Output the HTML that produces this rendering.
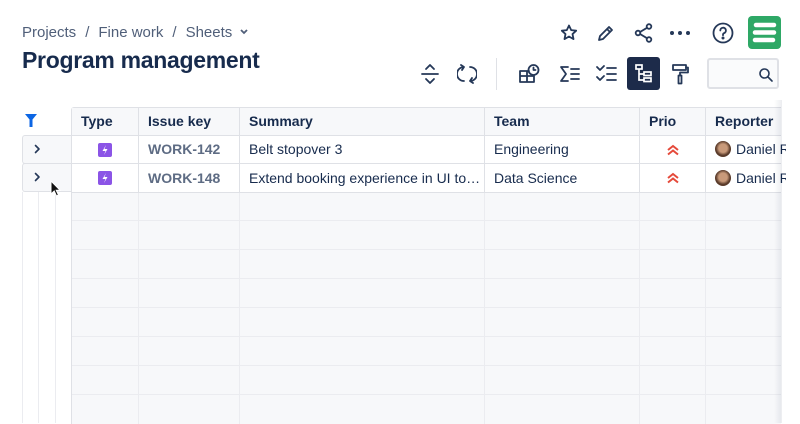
<!DOCTYPE html><html><head><style>
body{margin:0;width:800px;height:423px;overflow:hidden;background:#fff;font-family:"Liberation Sans",sans-serif;color:#172b4d;position:relative}
.a{position:absolute}
.bc{left:22px;top:24px;font-size:15px;color:#505f79;white-space:nowrap}
.bc span{margin:0 9px}
h1{position:absolute;left:22px;top:47px;margin:0;font-size:23px;font-weight:bold;letter-spacing:-0.3px;color:#172b4d}
svg.i{position:absolute;fill:none;stroke:#253858;stroke-width:1.8;stroke-linecap:round;stroke-linejoin:round}
.grid{left:71px;top:107px;width:709px;height:316px;background:#f7f8fa;border-left:1px solid #dfe1e6;border-top:1px solid #dfe1e6;border-radius:3px 0 0 0}
.hl{position:absolute;left:0;width:709px;height:1px;background:#ebecf0}
.vl{position:absolute;top:0;width:1px;height:316px;background:#ebecf0}
.row{position:absolute;left:0;width:709px;height:28px;background:#fff;border-bottom:1px solid #dfe1e6;box-sizing:border-box;z-index:1}
.hdr{background:#f7f8fa}
.c{position:absolute;top:0;height:27px;line-height:27px;font-size:14px;white-space:nowrap;overflow:hidden;border-right:1px solid #dfe1e6;padding-left:9px;box-sizing:border-box}
.hdr .c{font-weight:bold}
.key{color:#5e6c84;font-weight:bold}
.gut{position:absolute;left:22px;width:50px;height:28px;background:#f7f8fa;border:1px solid #dfe1e6;border-right:none;border-radius:3px 0 0 3px;box-sizing:border-box}
.bolt{position:absolute;left:26px;top:7px;width:14px;height:14px;background:#8b54e6;border-radius:2px;padding:0}
.bolt svg{display:block}
.av{display:inline-block;width:16px;height:16px;border-radius:50%;background:radial-gradient(circle at 50% 45%,#c99a7a 35%,#5a3b2a 60%);vertical-align:-3px;margin-right:5px}
</style></head><body>
<div class="a bc">Projects<span>/</span>Fine work<span>/</span>Sheets <svg width="10" height="8" style="vertical-align:1px;margin-left:3px" viewBox="0 0 10 8"><path d="M2 2l3 3 3-3" stroke="#505f79" stroke-width="1.8" fill="none"/></svg></div>
<h1>Program management</h1>
<svg class="i" style="left:559px;top:23px" width="20" height="20" viewBox="0 0 20 20"><path d="M10 2.5l2.2 4.6 5 .6-3.7 3.4 1 5-4.5-2.6-4.5 2.6 1-5L2.8 7.7l5-.6z"/></svg>
<svg class="i" style="left:596px;top:23px" width="20" height="20" viewBox="0 0 20 20"><path d="M3 17l1-4 9-9 3 3-9 9zM11 6l3 3"/></svg>
<svg class="i" style="left:633px;top:22px" width="22" height="22" viewBox="0 0 22 22"><circle cx="5" cy="11" r="2.3"/><circle cx="16" cy="4.5" r="2.3"/><circle cx="16" cy="17.5" r="2.3"/><path d="M7 10l7-4.2M7 12l7 4.2"/></svg>
<svg class="a" style="left:669px;top:30px" width="22" height="6" viewBox="0 0 22 6"><circle cx="3" cy="3" r="2" fill="#253858"/><circle cx="11" cy="3" r="2" fill="#253858"/><circle cx="19" cy="3" r="2" fill="#253858"/></svg>
<svg class="i" style="left:712px;top:22px" width="22" height="22" viewBox="0 0 22 22"><circle cx="11" cy="11" r="9.5"/><path d="M8.3 8.5a2.8 2.8 0 1 1 3.8 2.6c-.8.4-1.1.9-1.1 1.7v.4"/><circle cx="11" cy="16" r=".6" fill="#253858"/></svg>
<div class="a" style="left:748px;top:16px;width:33px;height:33px;background:#2ea866;border-radius:4px"><svg width="33" height="33" viewBox="0 0 33 33"><path d="M8 9h18M7 16.5h19M7 24h18" stroke="#fff" stroke-width="4.5" stroke-linecap="round"/></svg></div>
<svg class="i" style="left:420px;top:63px" width="20" height="22" viewBox="0 0 20 22"><path d="M6 6l4-4 4 4M6 16l4 4 4-4M2 11h16"/></svg>
<svg class="i" style="left:457px;top:63px" width="20" height="22" viewBox="0 0 20 22"><path d="M7 4a7 7 0 0 0 0 14M4 2l3 2-2 3M13 18a7 7 0 0 0 0-14M16 20l-3-2 2-3"/></svg>
<div class="a" style="left:496px;top:58px;width:1px;height:32px;background:#dfe1e6"></div>
<svg class="i" style="left:518px;top:63px" width="24" height="22" viewBox="0 0 24 22"><path d="M2 8h7v11H2zM2 13h14v6H9M9 8h2"/><circle cx="15.5" cy="7" r="5"/><path d="M15.5 4.5V7h2"/></svg>
<svg class="i" style="left:558px;top:64px" width="24" height="20" viewBox="0 0 24 20"><path d="M10 3H3l5 7-5 7h7M13 5h8M13 10h8M13 15h8"/></svg>
<svg class="i" style="left:595px;top:64px" width="24" height="20" viewBox="0 0 24 20"><path d="M2 3l3 3 4-4M2 13l3 3 4-4M12 4h9M12 10h9M12 16h9"/></svg>
<div class="a" style="left:627px;top:57px;width:33px;height:33px;background:#1d2b4a;border-radius:3px"><svg width="33" height="33" viewBox="0 0 33 33" fill="none" stroke="#fff" stroke-width="1.7"><rect x="9" y="8" width="6" height="4"/><rect x="17" y="15" width="7" height="3.5"/><rect x="17" y="21" width="7" height="3.5"/><path d="M12 12v11h5M12 17h5"/></svg></div>
<svg class="i" style="left:670px;top:63px" width="20" height="22" viewBox="0 0 20 22"><rect x="3" y="2" width="13" height="5"/><path d="M16 4.5h2v5H10v3"/><rect x="8.5" y="12.5" width="3" height="8"/></svg>
<div class="a" style="left:707px;top:58px;width:72px;height:31px;border:2px solid #dfe1e6;border-radius:3px;background:#fafbfc;box-sizing:border-box"><svg class="i" style="left:49px;top:7px;stroke-width:1.6" width="16" height="16" viewBox="0 0 16 16"><circle cx="6.5" cy="6.5" r="4.5"/><path d="M10 10l4 4"/></svg></div>
<svg class="a" style="left:25px;top:114px" width="12" height="14" viewBox="0 0 12 14"><path d="M0 0h12L7.5 5.5V13h-3V5.5z" fill="#0c66e4"/></svg>
<div class="a" style="left:22px;top:192px;width:1px;height:231px;background:#ebecf0"></div>
<div class="a" style="left:38px;top:192px;width:1px;height:231px;background:#ebecf0"></div>
<div class="a" style="left:55px;top:192px;width:1px;height:231px;background:#ebecf0"></div>
<div class="gut" style="top:135px;height:29px"></div>
<div class="gut" style="top:163px;height:29px"></div>
<svg class="i" style="left:33px;top:143px;stroke-width:1.6" width="8" height="12" viewBox="0 0 8 12"><path d="M2.5 2.5l3.5 3.5-3.5 3.5"/></svg>
<svg class="i" style="left:33px;top:171px;stroke-width:1.6" width="8" height="12" viewBox="0 0 8 12"><path d="M2.5 2.5l3.5 3.5-3.5 3.5"/></svg>
<svg class="a" style="left:50px;top:180px;z-index:3" width="12" height="18" viewBox="0 0 12 18"><path d="M1 1v13l3.2-3 2.3 5 2-1-2.3-4.8H10z" fill="#111" stroke="#fff" stroke-width="1"/></svg>
<div class="a grid">
<div class="hl" style="top:112px"></div><div class="hl" style="top:141px"></div><div class="hl" style="top:170px"></div><div class="hl" style="top:199px"></div><div class="hl" style="top:228px"></div><div class="hl" style="top:257px"></div><div class="hl" style="top:286px"></div>
<div class="vl" style="left:66px"></div><div class="vl" style="left:167px"></div><div class="vl" style="left:412px"></div><div class="vl" style="left:567px"></div><div class="vl" style="left:633px"></div>
<div class="row hdr" style="top:0">
<div class="c" style="left:0;width:67px">Type</div><div class="c" style="left:67px;width:101px">Issue key</div><div class="c" style="left:168px;width:245px">Summary</div><div class="c" style="left:413px;width:155px">Team</div><div class="c" style="left:568px;width:66px">Prio</div><div class="c" style="left:634px;width:80px;border:none">Reporter</div></div>
<div class="row" style="top:28px">
<div class="c" style="left:0;width:67px"><div class="bolt"><svg width="14" height="14" viewBox="0 0 14 14"><path d="M8 2L4.5 8h3L6 12l3.5-6h-3z" fill="#fff"/></svg></div></div><div class="c key" style="left:67px;width:101px">WORK-142</div><div class="c" style="left:168px;width:245px">Belt stopover 3</div><div class="c" style="left:413px;width:155px">Engineering</div><div class="c" style="left:568px;width:66px"><svg style="position:absolute;left:26px;top:8px" width="14" height="12" viewBox="0 0 14 12"><path d="M2 6l5-4 5 4M2 10.5l5-4 5 4" stroke="#e5493a" stroke-width="2" fill="none"/></svg></div><div class="c" style="left:634px;width:80px;border:none"><span class="av"></span>Daniel R</div></div>
<div class="row" style="top:56px;height:29px">
<div class="c" style="left:0;width:67px;height:28px;line-height:28px"><div class="bolt"><svg width="14" height="14" viewBox="0 0 14 14"><path d="M8 2L4.5 8h3L6 12l3.5-6h-3z" fill="#fff"/></svg></div></div><div class="c key" style="left:67px;width:101px;height:28px;line-height:28px">WORK-148</div><div class="c" style="left:168px;width:245px;height:28px;line-height:28px">Extend booking experience in UI to…</div><div class="c" style="left:413px;width:155px;height:28px;line-height:28px">Data Science</div><div class="c" style="left:568px;width:66px;height:28px"><svg style="position:absolute;left:26px;top:8px" width="14" height="12" viewBox="0 0 14 12"><path d="M2 6l5-4 5 4M2 10.5l5-4 5 4" stroke="#e5493a" stroke-width="2" fill="none"/></svg></div><div class="c" style="left:634px;width:80px;border:none;height:28px;line-height:28px"><span class="av"></span>Daniel R</div></div>
</div>
<div class="a" style="left:774px;top:100px;width:8px;height:323px;background:linear-gradient(90deg,rgba(9,30,66,0),rgba(9,30,66,.08));z-index:4"></div>
</body></html>
